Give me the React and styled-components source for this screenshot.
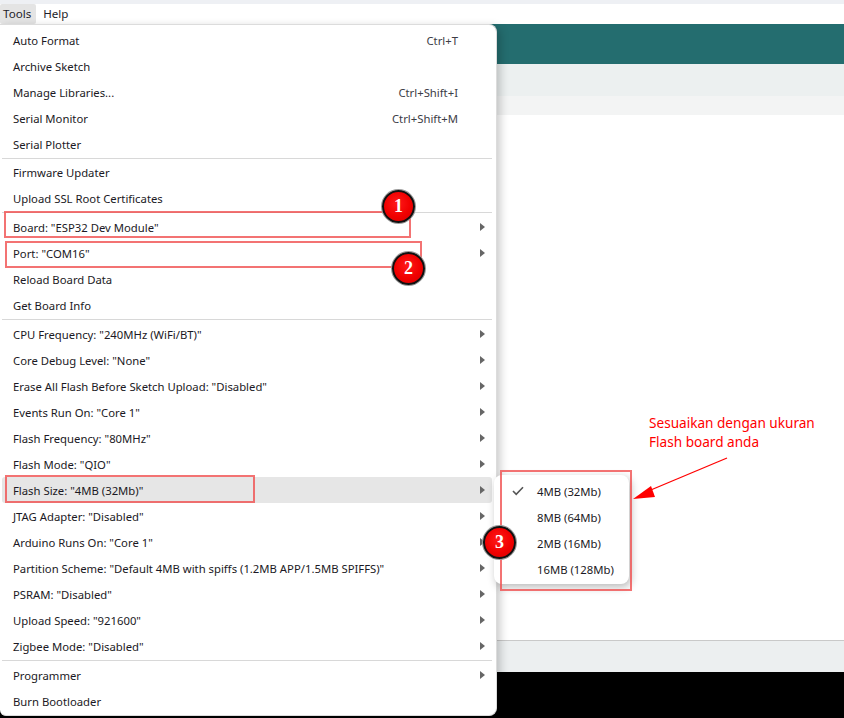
import React from "react";
import styled, { createGlobalStyle } from "styled-components";

const Global = createGlobalStyle`
  html, body { margin: 0; padding: 0; background: #fff; }
  body { font-family: "Noto Sans", "Open Sans", Arial, sans-serif; }
`;

const Page = styled.div`
  position: relative;
  width: 844px;
  height: 718px;
  overflow: hidden;
  display: flex;
  flex-direction: column;
  background: #fff;
`;

const TopStrip = styled.div`
  height: 4px;
  background: #eef0f4;
`;

const MenuBar = styled.div`
  height: 20px;
  display: flex;
  align-items: stretch;
  gap: 4px;
  background: #fff;
`;

const MenuTitle = styled.div`
  display: flex;
  align-items: center;
  padding: 0 5px 2px 3px;
  font-size: 11.6px;
  color: #1e1e2a;
  background: ${(p) => (p.$active ? "#e4e4e4" : "transparent")};
  border-radius: 2px;
`;

const TealBar = styled.div`
  height: 40px;
  background: #246d6f;
`;

const ToolStrip = styled.div`
  height: 32px;
  background: #ecf0f0;
`;

const TabStrip = styled.div`
  height: 19px;
  background: #f3f4f4;
`;

const Editor = styled.div`
  flex: 1;
  background: #fff;
`;

const StatusBar = styled.div`
  height: 31px;
  border-top: 1px solid #c9c9c9;
  background: #eceff0;
`;

const Console = styled.div`
  height: 46px;
  background: #000;
`;

const Menu = styled.div`
  position: absolute;
  left: 0;
  top: 24px;
  width: 497px;
  box-sizing: border-box;
  padding: 2px 4px 1px 2px;
  background: #fff;
  border: 1px solid #dcdcdc;
  border-left: none;
  border-radius: 0 8px 8px 6px;
  box-shadow: 3px 3px 10px rgba(0, 0, 0, 0.22);
  display: flex;
  flex-direction: column;
  z-index: 2;
`;

const Item = styled.div`
  height: 26px;
  display: flex;
  align-items: center;
  padding: 0 7px 0 11px;
  font-size: 11.3px;
  color: #1b1924;
  white-space: nowrap;
  border-radius: 3px;
  background: ${(p) => (p.$hover ? "#e6e6e6" : "transparent")};
`;

const Label = styled.span`
  flex: 1;
`;

const Shortcut = styled.span`
  margin-right: 27px;
  color: #3c3c46;
`;

const SubArrow = styled.span`
  width: 0;
  height: 0;
  border-top: 4px solid transparent;
  border-bottom: 4px solid transparent;
  border-left: 5px solid #666;
`;

const Separator = styled.div`
  height: 1px;
  margin: ${(p) => (p.$tight ? "1px 0 0" : "1px 0")};
  background: #d8d8d8;
`;

const SubMenu = styled.div`
  position: absolute;
  left: 494px;
  top: 475px;
  width: 135px;
  box-sizing: border-box;
  padding: 3px 0 2px;
  background: #fff;
  border-radius: 8px;
  box-shadow: 2px 3px 8px rgba(0, 0, 0, 0.28);
  display: flex;
  flex-direction: column;
  z-index: 3;
`;

const SubItem = styled.div`
  height: 26px;
  display: flex;
  align-items: center;
  font-size: 11.3px;
  color: #1b1924;
`;

const CheckCell = styled.span`
  width: 43px;
  display: flex;
  justify-content: flex-start;
  padding-left: 18px;
  box-sizing: border-box;
`;

const RedBox = styled.div`
  position: absolute;
  left: ${(p) => p.$x}px;
  top: ${(p) => p.$y}px;
  width: ${(p) => p.$w}px;
  height: ${(p) => p.$h}px;
  box-sizing: border-box;
  border: 2px solid rgba(240, 80, 80, 0.8);
  z-index: 4;
  pointer-events: none;
`;

const Badge = styled.div`
  position: absolute;
  left: ${(p) => p.$x}px;
  top: ${(p) => p.$y}px;
  width: 33px;
  height: 33px;
  box-sizing: border-box;
  border-radius: 50%;
  border: 2px solid #111;
  box-shadow: 0 0 0 1px #9a9a9a;
  background: radial-gradient(circle at 45% 40%, #ff1a1a 0%, #f00000 55%, #d40000 100%);
  display: flex;
  align-items: center;
  justify-content: center;
  color: #fff;
  font-family: "Liberation Serif", "Times New Roman", serif;
  font-weight: bold;
  font-size: 18px;
  z-index: 5;
`;

const Note = styled.div`
  position: absolute;
  left: 649px;
  top: 413px;
  font-size: 13.6px;
  line-height: 19px;
  color: #ff0000;
  z-index: 5;
`;

const ArrowSvg = styled.svg`
  position: absolute;
  left: 620px;
  top: 450px;
  z-index: 5;
`;

const items1 = [
  { label: "Auto Format", sc: "Ctrl+T" },
  { label: "Archive Sketch" },
  { label: "Manage Libraries...", sc: "Ctrl+Shift+I" },
  { label: "Serial Monitor", sc: "Ctrl+Shift+M" },
  { label: "Serial Plotter" },
];
const items2 = [{ label: "Firmware Updater" }, { label: "Upload SSL Root Certificates" }];
const items3 = [
  { label: 'Board: "ESP32 Dev Module"', sub: true },
  { label: 'Port: "COM16"', sub: true },
  { label: "Reload Board Data" },
  { label: "Get Board Info" },
];
const items4 = [
  { label: 'CPU Frequency: "240MHz (WiFi/BT)"', sub: true },
  { label: 'Core Debug Level: "None"', sub: true },
  { label: 'Erase All Flash Before Sketch Upload: "Disabled"', sub: true },
  { label: 'Events Run On: "Core 1"', sub: true },
  { label: 'Flash Frequency: "80MHz"', sub: true },
  { label: 'Flash Mode: "QIO"', sub: true },
  { label: 'Flash Size: "4MB (32Mb)"', sub: true, hover: true },
  { label: 'JTAG Adapter: "Disabled"', sub: true },
  { label: 'Arduino Runs On: "Core 1"', sub: true },
  { label: 'Partition Scheme: "Default 4MB with spiffs (1.2MB APP/1.5MB SPIFFS)"', sub: true },
  { label: 'PSRAM: "Disabled"', sub: true },
  { label: 'Upload Speed: "921600"', sub: true },
  { label: 'Zigbee Mode: "Disabled"', sub: true },
];
const items5 = [{ label: "Programmer", sub: true }, { label: "Burn Bootloader" }];

const groups = [items1, items2, items3, items4, items5];

const sizes = ["4MB (32Mb)", "8MB (64Mb)", "2MB (16Mb)", "16MB (128Mb)"];

function Row({ it }) {
  return (
    <Item $hover={it.hover}>
      <Label>{it.label}</Label>
      {it.sc && <Shortcut>{it.sc}</Shortcut>}
      {it.sub && <SubArrow />}
    </Item>
  );
}

export default function App() {
  return (
    <>
      <Global />
      <Page>
        <TopStrip />
        <MenuBar>
          <MenuTitle $active>Tools</MenuTitle>
          <MenuTitle>Help</MenuTitle>
        </MenuBar>
        <TealBar />
        <ToolStrip />
        <TabStrip />
        <Editor />
        <StatusBar />
        <Console />

        <Menu>
          {groups.map((g, gi) => (
            <React.Fragment key={gi}>
              {gi > 0 && <Separator $tight={gi === 1} />}
              {g.map((it) => (
                <Row key={it.label} it={it} />
              ))}
            </React.Fragment>
          ))}
        </Menu>

        <SubMenu>
          {sizes.map((s, i) => (
            <SubItem key={s}>
              <CheckCell>
                {i === 0 && (
                  <svg width="12" height="10" viewBox="0 0 12 10">
                    <polyline points="1,5 4.2,8.3 11,1.2" fill="none" stroke="#555" strokeWidth="1.6" />
                  </svg>
                )}
              </CheckCell>
              {s}
            </SubItem>
          ))}
        </SubMenu>

        <RedBox $x={4} $y={211} $w={407} $h={27} />
        <RedBox $x={5} $y={241} $w={417} $h={27} />
        <RedBox $x={5} $y={475} $w={250} $h={28} />
        <RedBox $x={500} $y={470} $w={132} $h={121} />

        <Badge $x={382} $y={190}>1</Badge>
        <Badge $x={392} $y={252}>2</Badge>
        <Badge $x={483} $y={526}>3</Badge>

        <Note>
          Sesuaikan dengan ukuran
          <br />
          Flash board anda
        </Note>

        <ArrowSvg width="120" height="56" viewBox="0 0 120 56">
          <line x1="107" y1="8" x2="26" y2="42" stroke="#ff0000" strokeWidth="1.3" />
          <polygon points="13,49 31,36 35,47" fill="#ff0000" />
        </ArrowSvg>
      </Page>
    </>
  );
}
